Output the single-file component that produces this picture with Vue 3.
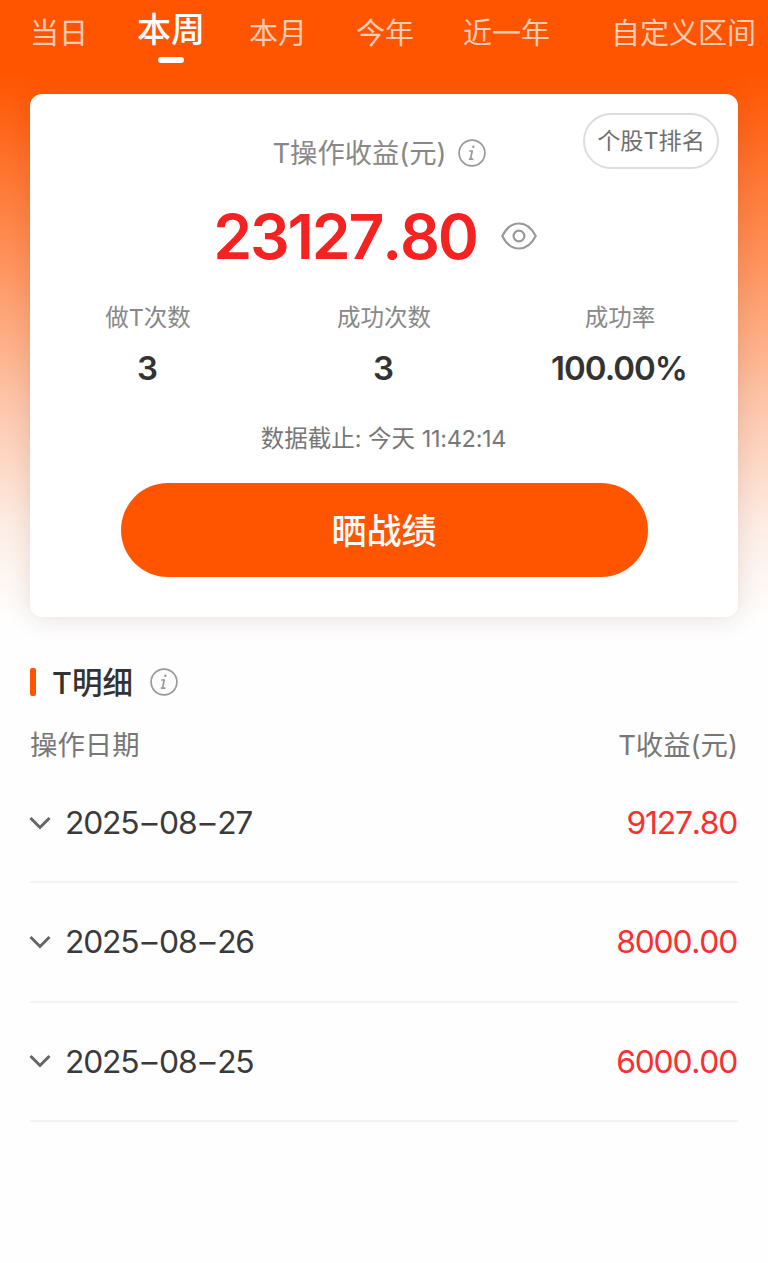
<template>
    <div class="page">
        <div class="hero">
            <div class="tabs">
                <div
                    v-for="tab in tabs"
                    :key="tab"
                    class="tab"
                    :class="{ active: tab === current }"
                    @click="current = tab"
                >{{ tab }}</div>
            </div>

            <div class="card">
                <div class="rank">个股T排名</div>
                <div class="title">
                    <span>T操作收益(元)</span>
                    <svg class="info" viewBox="0 0 28 28">
                        <circle cx="14" cy="14" r="12.9" />
                        <path d="M11.2 12h3l-1.7 8.1h2.9M10.8 20.2h2.4" />
                        <circle class="dot" cx="15.4" cy="7.8" r="1.2" />
                    </svg>
                </div>
                <div class="total">
                    <span class="amount">{{ visible ? '23127.80' : '****' }}</span>
                    <svg class="eye" viewBox="0 0 36 28" @click="visible = !visible">
                        <path d="M1.3 14C5 6.6 11 1.5 18 1.5S31 6.6 34.7 14C31 21.4 25 26.5 18 26.5S5 21.4 1.3 14z" />
                        <circle cx="18" cy="14" r="5.4" />
                    </svg>
                </div>
                <div class="stats">
                    <div v-for="stat in stats" :key="stat.label" class="stat">
                        <div class="label">{{ stat.label }}</div>
                        <div class="value">{{ stat.value }}</div>
                    </div>
                </div>
                <div class="deadline">数据截止: 今天 <span class="time">11:42:14</span></div>
                <button class="share">晒战绩</button>
            </div>
        </div>

        <div class="detail">
            <div class="heading">
                <span class="bar"></span>
                <span class="text">T明细</span>
                <svg class="info" viewBox="0 0 28 28">
                    <circle cx="14" cy="14" r="12.9" />
                    <path d="M11.2 12h3l-1.7 8.1h2.9M10.8 20.2h2.4" />
                    <circle class="dot" cx="15.4" cy="7.8" r="1.2" />
                </svg>
            </div>
            <div class="columns">
                <span>操作日期</span>
                <span>T收益(元)</span>
            </div>
            <div v-for="row in rows" :key="row.date" class="row">
                <svg class="arrow" viewBox="0 0 22 14">
                    <path d="M1.5 2l9.5 9.5L20.5 2" />
                </svg>
                <span class="date">
                    <template v-for="(part, i) in row.date.split('-')" :key="i"><i v-if="i">–</i>{{ part }}</template>
                </span>
                <span class="profit">{{ row.profit }}</span>
            </div>
        </div>
    </div>
</template>

<script setup>
import { ref } from 'vue';

const tabs = ['当日', '本周', '本月', '今年', '近一年', '自定义区间'];
const current = ref('本周');
const visible = ref(true);

const stats = [
    { label: '做T次数', value: '3' },
    { label: '成功次数', value: '3' },
    { label: '成功率', value: '100.00%' },
];

const rows = [
    { date: '2025-08-27', profit: '9127.80' },
    { date: '2025-08-26', profit: '8000.00' },
    { date: '2025-08-25', profit: '6000.00' },
];
</script>

<style>
body {
    margin: 0;
    background: #fefefe;
}
</style>

<style scoped>
.page {
    width: 768px;
    height: 1263px;
    overflow: hidden;
    background: #fefefe;
    font-family: Inter, "Noto Sans CJK SC", sans-serif;
    color: #333;
}

.hero {
    height: 640px;
    background: linear-gradient(#ff5500 75px, #ff9560 270px, #fdc4a7 400px, #fdeee6 530px, #fefefe 620px);
}

.tabs {
    display: flex;
    gap: 49px;
    height: 94px;
    padding-left: 30px;
    white-space: nowrap;
}

.tab {
    font-family: "Noto Sans CJK SC", sans-serif;
    font-size: 29px;
    line-height: 62px;
    color: #ffcdb5;

    &:last-child {
        margin-left: 12px;
    }

    &.active {
        display: flex;
        flex-direction: column;
        align-items: center;
        margin-right: -5px;
        font-size: 34px;
        font-weight: 500;
        line-height: 55px;
        color: #fff;
    }

    &.active::after {
        content: "";
        width: 26px;
        height: 6px;
        margin-top: 2px;
        border-radius: 3px;
        background: #fff;
    }
}

.card {
    position: relative;
    display: flex;
    flex-direction: column;
    align-items: center;
    box-sizing: border-box;
    width: 708px;
    height: 523px;
    margin: 0 auto;
    border-radius: 12px;
    background: #fff;
    box-shadow: 0 2px 24px rgba(80, 30, 0, 0.13);
}

.rank {
    position: absolute;
    top: 19px;
    right: 19px;
    box-sizing: border-box;
    width: 136px;
    height: 56px;
    border: 2px solid #ddd;
    border-radius: 28px;
    font-size: 23.2px;
    line-height: 53px;
    text-align: center;
    color: #707070;
}

.title {
    display: flex;
    align-items: center;
    gap: 11px;
    height: 40px;
    margin: 39px 10px 0 0;
    font-size: 27.3px;
    line-height: 42px;
    color: #888;

    & span {
        height: 40px;
    }
}

.info {
    width: 28px;
    height: 28px;
    fill: none;
    stroke: #999;
    stroke-width: 1.7;

    & .dot {
        fill: #999;
        stroke: none;
    }
}

.total {
    display: flex;
    align-items: center;
    gap: 24px;
    height: 80px;
    margin: 23px 18px 0 0;
}

.amount {
    font-size: 62.5px;
    font-weight: 600;
    font-kerning: none;
    line-height: 80px;
    letter-spacing: -2.2px;
    color: #f52222;
}

.eye {
    width: 36px;
    height: 28px;
    fill: none;
    stroke: #999;
    stroke-width: 2.2;
}

.stats {
    display: flex;
    width: 100%;
    margin-top: 19px;
}

.stat {
    flex: 1;
    text-align: center;

    & .label {
        font-size: 23.5px;
        line-height: 46px;
        color: #888;
    }

    & .value {
        margin-right: 2px;
        font-size: 33px;
        font-weight: 600;
        line-height: 54px;
        letter-spacing: -1px;
    }
}

.deadline {
    margin: 24px 1px 0 0;
    font-size: 23.5px;
    line-height: 39px;
    color: #777;

    & .time {
        letter-spacing: -0.3px;
    }
}

.share {
    width: 527px;
    height: 94px;
    margin-top: 25px;
    padding: 0 0 3px;
    border: none;
    border-radius: 47px;
    background: #ff5500;
    font-family: "Noto Sans CJK SC", sans-serif;
    font-size: 35px;
    font-weight: 500;
    color: #fff;
}

.detail {
    padding: 0 30px;
}

.heading {
    display: flex;
    align-items: center;
    height: 84px;

    & .bar {
        width: 6px;
        height: 28px;
        border-radius: 2px;
        background: #ff5500;
    }

    & .text {
        margin: 0 17px 3px 16px;
        font-size: 30.5px;
        font-weight: 500;
    }
}

.columns {
    display: flex;
    justify-content: space-between;
    font-size: 27.4px;
    line-height: 42px;
    color: #777;
}

.row {
    display: flex;
    align-items: center;
    box-sizing: border-box;
    height: 119.5px;
    border-bottom: 2px solid #f3f3f3;
    font-size: 31.8px;
    letter-spacing: -1.2px;
    color: #3a3a3a;

    &:nth-child(3) {
        height: 117px;
        padding-bottom: 2px;
    }

    & .arrow {
        width: 22px;
        height: 14px;
        margin: 0 14px 0 -1px;
        fill: none;
        stroke: #666;
        stroke-width: 3;
    }

    & i {
        margin: 0 3px;
        font-style: normal;
    }

    & .profit {
        margin-left: auto;
        padding-right: 1px;
        font-kerning: none;
        color: #fa2f2f;
    }
}
</style>
